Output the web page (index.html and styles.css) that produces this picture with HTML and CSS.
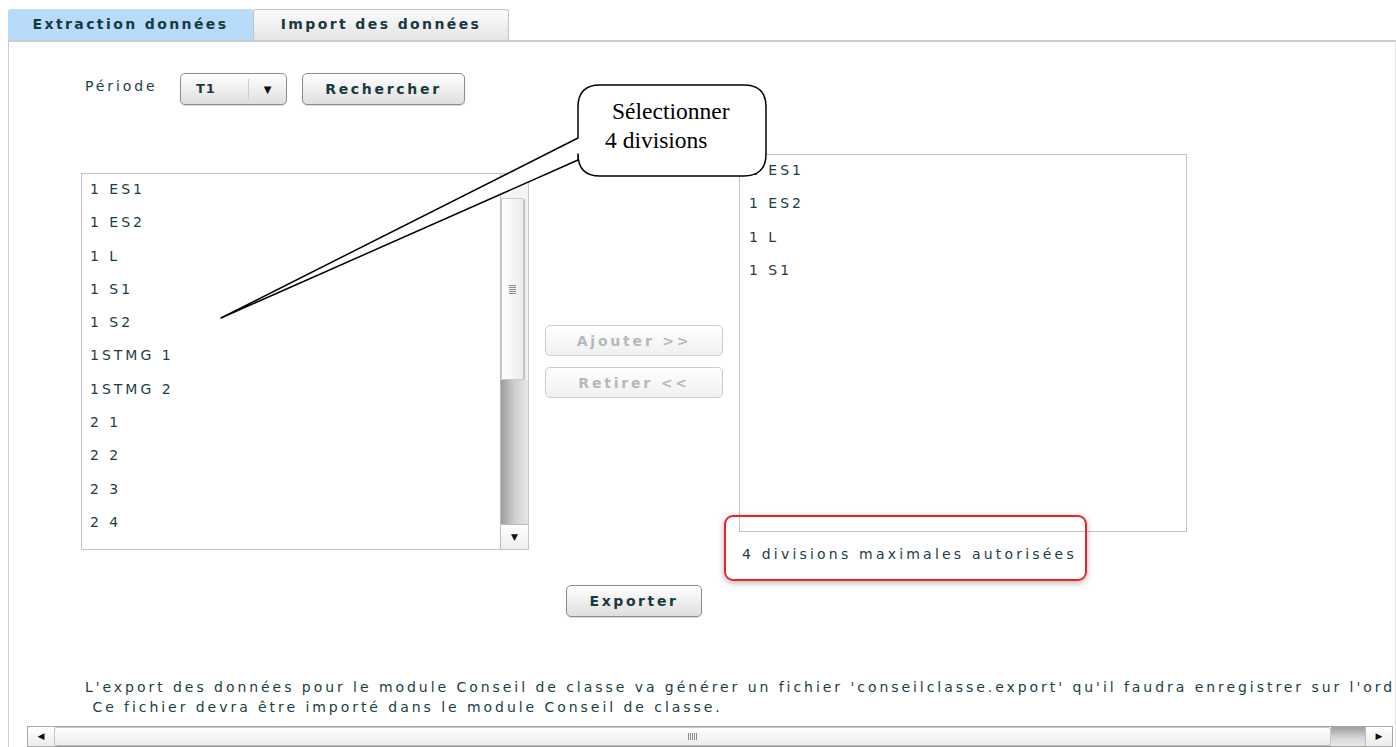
FILE: index.html
```html
<!DOCTYPE html>
<html lang="fr">

<head>
    <meta charset="UTF-8">
    <title>Conseil de classe - Extraction</title>
    <link rel="stylesheet" href="styles.css">
</head>

<body>

    <div class="page">
        <div class="tabs">
            <div class="tab active">Extraction données</div>
            <div class="tab">Import des données</div>
        </div>

        <div class="panel">
            <div class="filter">
                <span class="label">Période</span>
                <div class="select">
                    <span class="select-value">T1</span>
                    <span class="select-arrow">&#9660;</span>
                </div>
                <button class="btn btn-search">Rechercher</button>
            </div>

            <div class="picker">
                <div class="list list-source">
                    <ul class="items">
                        <li>1 ES1</li>
                        <li>1 ES2</li>
                        <li>1 L</li>
                        <li>1 S1</li>
                        <li>1 S2</li>
                        <li>1STMG 1</li>
                        <li>1STMG 2</li>
                        <li>2 1</li>
                        <li>2 2</li>
                        <li>2 3</li>
                        <li>2 4</li>
                    </ul>
                    <div class="vscroll">
                        <div class="vscroll-up"></div>
                        <div class="vscroll-thumb"><span class="grip"></span></div>
                        <div class="vscroll-track"></div>
                        <div class="vscroll-down">&#9660;</div>
                    </div>
                </div>

                <div class="moves">
                    <button class="btn btn-move" disabled>Ajouter &gt;&gt;</button>
                    <button class="btn btn-move" disabled>Retirer &lt;&lt;</button>
                </div>

                <div class="target">
                    <div class="list list-target">
                        <ul class="items">
                            <li>1 ES1</li>
                            <li>1 ES2</li>
                            <li>1 L</li>
                            <li>1 S1</li>
                        </ul>
                    </div>
                    <p class="limit">4 divisions maximales autorisées</p>
                </div>
            </div>

            <div class="export-row">
                <button class="btn btn-export">Exporter</button>
            </div>

            <div class="notice">
                <div>L'export des données pour le module Conseil de classe va générer un fichier 'conseilclasse.export' qu'il faudra enregistrer sur l'ordinateur.</div>
                <div>&nbsp;Ce fichier devra être importé dans le module Conseil de classe.</div>
            </div>

            <div class="hscroll">
                <div class="hscroll-left">&#9664;</div>
                <div class="hscroll-thumb"><span class="hgrip"></span></div>
                <div class="hscroll-track"></div>
                <div class="hscroll-right">&#9654;</div>
            </div>
        </div>

        <!-- annotations posées par-dessus la capture -->
        <div class="highlight"></div>

        <svg class="callout" width="1396" height="747" viewBox="0 0 1396 747">
            <path d="M578,138 L221,318 L578,160 L578,154 Q578,176 600,176 L744,176 Q766,176 766,154 L766,107 Q766,85 744,85 L600,85 Q578,85 578,107 Z"
                fill="#fff" stroke="#000" stroke-width="1.5" stroke-linejoin="round" />
        </svg>
        <div class="callout-text">
            <div class="callout-line1">Sélectionner</div>
            <div class="callout-line2">4 divisions</div>
        </div>
    </div>

</body>

</html>
```

FILE: styles.css
```css
html,
body {
    margin: 0;
    padding: 0;
    background: white;
    height: 100%;
    overflow: hidden;
}

.page {
    position: relative;
    width: 1396px;
    height: 747px;
    overflow: hidden;
    font-family: "DejaVu Sans", Verdana, sans-serif;
    font-size: 14px;
    color: #1b3e45;
}

/* onglets */

.tabs {
    display: flex;
    padding-top: 9px;
    margin-left: 8px;
    border-bottom: 2px solid #c9cfce;
}

.tab {
    box-sizing: border-box;
    height: 31px;
    line-height: 29px;
    text-align: center;
    font-weight: bold;
    color: #173a41;
    border: 1px solid #c4c4c4;
    border-bottom: none;
    border-radius: 3px 3px 0 0;
    letter-spacing: 2.4px;
}

.tab.active {
    width: 245px;
    background: #b8dbf9;
    border-color: #b8dbf9;
}

.tab:not(.active) {
    width: 256px;
    background: linear-gradient(#fbfbfb, #e4e4e4);
}

/* panneau */

.panel {
    box-sizing: border-box;
    margin-left: 8px;
    height: 706px;
    border-left: 1px solid #cfcfcf;
    border-right: 1px solid #e4e4e4;
    padding-top: 31px;
}

.filter {
    display: flex;
    align-items: flex-start;
}

.label {
    width: 95px;
    margin-left: 76px;
    line-height: 26px;
    letter-spacing: 2.9px;
}

.btn {
    box-sizing: border-box;
    font-family: inherit;
    font-size: 14px;
    font-weight: bold;
    color: #173a41;
    border: 1px solid #8c8c8c;
    border-radius: 5px;
    background: linear-gradient(#ffffff, #ececec 60%, #dedede);
    box-shadow: 0 1px 1px rgba(0, 0, 0, 0.15);
    letter-spacing: 2.7px;
    padding: 0;
}

.select {
    box-sizing: border-box;
    display: flex;
    align-items: center;
    width: 107px;
    height: 32px;
    border: 1px solid #8c8c8c;
    border-radius: 5px;
    background: linear-gradient(#ffffff, #ececec 60%, #dedede);
    box-shadow: 0 1px 1px rgba(0, 0, 0, 0.15);
    font-weight: bold;
    font-size: 13px;
}

.select-value {
    width: 52px;
    padding-left: 15px;
    border-right: 1px solid #cfcfcf;
    line-height: 20px;
    letter-spacing: 1px;
}

.select-arrow {
    flex: 1;
    text-align: center;
    font-size: 10px;
    color: #111;
}

.btn-search {
    width: 163px;
    height: 32px;
    margin-left: 15px;
}

/* listes */

.picker {
    display: flex;
    align-items: flex-start;
    margin-top: 49px;
    margin-left: 72px;
}

.list {
    box-sizing: border-box;
    width: 448px;
    border: 1px solid #c4c4c4;
    background: white;
    overflow: hidden;
}

.list-source {
    display: flex;
    height: 377px;
    margin-top: 19px;
}

.list-target {
    height: 378px;
}

.items {
    flex: 1;
    list-style: none;
    margin: -1px 0 0;
    padding: 0 0 0 8px;
}

.list-target .items {
    padding-left: 9px;
}

.items li {
    height: 33.3px;
    line-height: 33.3px;
    letter-spacing: 3px;
    white-space: nowrap;
}

.vscroll {
    display: flex;
    flex-direction: column;
    width: 27px;
    border-left: 1px solid #bdbdbd;
    background: #f2f2f2;
}

.vscroll-up {
    height: 24px;
    background: #f4f4f4;
}

.vscroll-thumb {
    display: flex;
    align-items: center;
    justify-content: center;
    height: 180px;
    margin-right: 4px;
    border: 1px solid #c9c9c9;
    border-radius: 2px;
    background: linear-gradient(90deg, #ffffff, #ececec);
    box-shadow: 1px 1px 1px rgba(0, 0, 0, 0.25);
}

.grip {
    width: 7px;
    height: 9px;
    background: repeating-linear-gradient(#8a8a8a 0 1px, transparent 1px 2px);
}

.vscroll-track {
    flex: 1;
    background: linear-gradient(90deg, #9c9c9c, #cfcfcf 50%, #e6e6e6);
}

.vscroll-down {
    height: 24px;
    line-height: 24px;
    text-align: center;
    font-size: 9px;
    color: #111;
    border-top: 1px solid #bdbdbd;
    background: linear-gradient(#ffffff, #ededed);
}

.moves {
    display: flex;
    flex-direction: column;
    gap: 11px;
    width: 178px;
    margin: 171px 16px 0;
}

.btn-move {
    height: 31px;
    color: #b4b9b9;
    border-color: #cdcdcd;
    background: linear-gradient(#ffffff, #f0f0f0);
    box-shadow: none;
    letter-spacing: 2.8px;
}

.limit {
    margin: 12px 0 0;
    padding-left: 3px;
    line-height: 20px;
    letter-spacing: 3.2px;
    white-space: nowrap;
}

.export-row {
    width: 1106px;
    margin: 21px 0 0 72px;
    text-align: center;
}

.btn-export {
    width: 136px;
    height: 32px;
    letter-spacing: 2.6px;
}

.notice {
    margin-top: 60px;
    padding-left: 76px;
    line-height: 20px;
    white-space: nowrap;
    overflow: hidden;
    letter-spacing: 2.95px;
}

/* barre de défilement horizontale */

.hscroll {
    box-sizing: border-box;
    display: flex;
    width: 1366px;
    height: 21px;
    margin: 9px 0 0 18px;
    border: 1px solid #a9a9a9;
    background: #f2f2f2;
}

.hscroll-left,
.hscroll-right {
    width: 26px;
    line-height: 19px;
    text-align: center;
    font-size: 9px;
    color: #111;
    background: linear-gradient(#ffffff, #ececec);
}

.hscroll-thumb {
    display: flex;
    align-items: center;
    justify-content: center;
    width: 1275px;
    border: 1px solid #c4c4c4;
    border-radius: 3px;
    background: linear-gradient(#ffffff, #ececec);
    box-shadow: 1px 1px 1px rgba(0, 0, 0, 0.2);
}

.hgrip {
    width: 9px;
    height: 7px;
    background: repeating-linear-gradient(90deg, #8a8a8a 0 1px, transparent 1px 2px);
}

.hscroll-track {
    flex: 1;
    background: linear-gradient(#9e9e9e, #d8d8d8 60%, #e8e8e8);
}

.hscroll-right {
    border-left: 1px solid #bdbdbd;
}

/* annotations */

.highlight {
    position: absolute;
    left: 724px;
    top: 515px;
    width: 359px;
    height: 62px;
    border: 2px solid #ea2327;
    border-radius: 9px;
    box-shadow: 0 2px 6px rgba(0, 0, 0, 0.3);
}

.callout {
    position: absolute;
    left: 0;
    top: 0;
    pointer-events: none;
}

.callout-text {
    position: absolute;
    left: 578px;
    top: 97px;
    width: 188px;
    font-family: "Liberation Serif", "Times New Roman", serif;
    font-size: 23.5px;
    line-height: 29px;
    color: #000;
}

.callout-line1 {
    padding-left: 34px;
}

.callout-line2 {
    padding-left: 27px;
}
```
